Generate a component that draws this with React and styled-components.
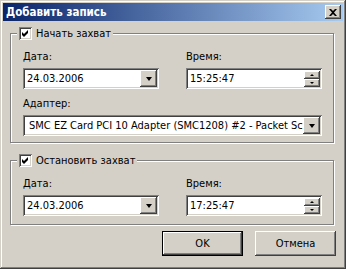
import React from 'react'
import styled, { createGlobalStyle } from 'styled-components'

const GlobalStyle = createGlobalStyle`
  html, body {
    margin: 0;
    padding: 0;
    background: #d4d0c8;
  }
  * {
    box-sizing: border-box;
  }
`

const Window = styled.div`
  width: 346px;
  height: 269px;
  padding: 3px;
  background: #d4d0c8;
  font-family: 'DejaVu Sans Condensed', 'Liberation Sans', Arial, sans-serif;
  font-size: 11px;
  color: #000;
  box-shadow: inset -1px -1px 0 #404040, inset 1px 1px 0 #d4d0c8,
    inset -2px -2px 0 #808080, inset 2px 2px 0 #fff;
  display: flex;
  flex-direction: column;
`

const TitleBar = styled.div`
  height: 18px;
  display: flex;
  align-items: center;
  justify-content: space-between;
  padding: 0 2px 0 3px;
  background: linear-gradient(to right, #0a246a, #a6caf0);
`

const Title = styled.span`
  color: #fff;
  font-weight: bold;
  font-size: 11.5px;
`

const raised = `
  background: #d4d0c8;
  box-shadow: inset -1px -1px 0 #404040, inset 1px 1px 0 #fff,
    inset -2px -2px 0 #808080, inset 2px 2px 0 #d4d0c8;
`

const sunken = `
  box-shadow: inset 1px 1px 0 #808080, inset -1px -1px 0 #fff,
    inset 2px 2px 0 #404040, inset -2px -2px 0 #d4d0c8;
`

const CloseButton = styled.div`
  ${raised}
  width: 16px;
  height: 14px;
  display: flex;
  align-items: center;
  justify-content: center;
`

const Client = styled.div`
  flex: 1;
  padding: 6px 7px 0 7px;
  display: flex;
  flex-direction: column;
`

const Group = styled.fieldset`
  margin: 0 2px 0 0;
  padding: 0 11px ${({ $bottom }) => $bottom}px 12px;
  border: 1px solid #808080;
  box-shadow: inset 1px 1px 0 #fff, 1px 1px 0 #fff;
  & + & {
    margin-top: 11px;
  }
`

const Legend = styled.legend`
  margin-left: -6px;
  padding: 0 2px 0 2px;
  display: flex;
  align-items: center;
  gap: 4px;
  background: #d4d0c8;
  height: 13px;
`

const CheckBox = styled.span`
  ${sunken}
  background: #fff;
  width: 13px;
  height: 13px;
  display: flex;
  align-items: center;
  justify-content: center;
`

const Grid = styled.div`
  display: grid;
  grid-template-columns: 136px 136px;
  column-gap: 27px;
`

const Field = styled.div`
  display: flex;
  flex-direction: column;
  grid-column: ${({ $span }) => ($span ? '1 / span 2' : 'auto')};
  width: ${({ $span }) => ($span ? '299px' : 'auto')};
`

const Label = styled.div`
  height: 13px;
  line-height: 13px;
  margin: ${({ $top }) => $top}px 0 5px 0;
`

const Box = styled.div`
  ${sunken}
  background: #fff;
  height: 21px;
  padding: 2px;
  display: flex;
  align-items: stretch;
`

const Value = styled.div`
  flex: 1;
  padding-left: ${({ $pad }) => $pad}px;
  line-height: 17px;
  white-space: nowrap;
  overflow: hidden;
`

const DropButton = styled.div`
  ${raised}
  width: 17px;
  display: flex;
  align-items: center;
  justify-content: center;
`

const Arrow = styled.span`
  width: 0;
  height: 0;
  border-left: 3.5px solid transparent;
  border-right: 3.5px solid transparent;
  border-top: 4px solid #000;
`

const Spin = styled.div`
  width: 16px;
  display: flex;
  flex-direction: column;
  justify-content: space-between;
  padding-top: 1px;
`

const SpinButton = styled.div`
  ${raised}
  height: 8px;
  display: flex;
  align-items: center;
  justify-content: center;
`

const SpinArrow = styled.span`
  width: 0;
  height: 0;
  border-left: 2px solid transparent;
  border-right: 2px solid transparent;
  ${({ $up }) =>
    $up ? 'border-bottom: 2px solid #000;' : 'border-top: 2px solid #000;'}
`

const Buttons = styled.div`
  display: flex;
  justify-content: flex-end;
  gap: 12px;
  margin-top: 6px;
`

const Button = styled.div`
  ${raised}
  width: 81px;
  height: 25px;
  display: flex;
  align-items: center;
  justify-content: center;
  ${({ $default }) => $default && 'border: 1px solid #000;'}
`

const Check = () => (
  <svg width="7" height="7" viewBox="0 0 7 7">
    <path d="M0 2 L2 4 L6 0 L6 3 L2 7 L0 5 Z" fill="#000" />
  </svg>
)

const CloseIcon = () => (
  <svg width="8" height="7" viewBox="0 0 8 7">
    <path
      d="M0 0 H2 L4 2 L6 0 H8 L5 3.5 L8 7 H6 L4 5 L2 7 H0 L3 3.5 Z"
      fill="#000"
    />
  </svg>
)

const Combo = ({ value, pad = 2 }) => (
  <Box>
    <Value $pad={pad}>{value}</Value>
    <DropButton>
      <Arrow />
    </DropButton>
  </Box>
)

const TimeBox = ({ value }) => (
  <Box>
    <Value $pad={2}>{value}</Value>
    <Spin>
      <SpinButton>
        <SpinArrow $up />
      </SpinButton>
      <SpinButton>
        <SpinArrow />
      </SpinButton>
    </Spin>
  </Box>
)

const CaptureGroup = ({ title, date, time, adapter }) => (
  <Group $bottom={adapter ? 6 : 8}>
    <Legend>
      <CheckBox>
        <Check />
      </CheckBox>
      <span>{title}</span>
    </Legend>
    <Grid>
      <Field>
        <Label $top={10}>Дата:</Label>
        <Combo value={date} />
      </Field>
      <Field>
        <Label $top={10}>Время:</Label>
        <TimeBox value={time} />
      </Field>
      {adapter && (
        <Field $span>
          <Label $top={8}>Адаптер:</Label>
          <Combo value={adapter} pad={4} />
        </Field>
      )}
    </Grid>
  </Group>
)

export default function App() {
  return (
    <>
      <GlobalStyle />
      <Window>
        <TitleBar>
          <Title>Добавить запись</Title>
          <CloseButton>
            <CloseIcon />
          </CloseButton>
        </TitleBar>
        <Client>
          <CaptureGroup
            title="Начать захват"
            date="24.03.2006"
            time="15:25:47"
            adapter="SMC EZ Card PCI 10 Adapter (SMC1208) #2 - Packet Scheduler Miniport"
          />
          <CaptureGroup
            title="Остановить захват"
            date="24.03.2006"
            time="17:25:47"
          />
          <Buttons>
            <Button $default>OK</Button>
            <Button>Отмена</Button>
          </Buttons>
        </Client>
      </Window>
    </>
  )
}
